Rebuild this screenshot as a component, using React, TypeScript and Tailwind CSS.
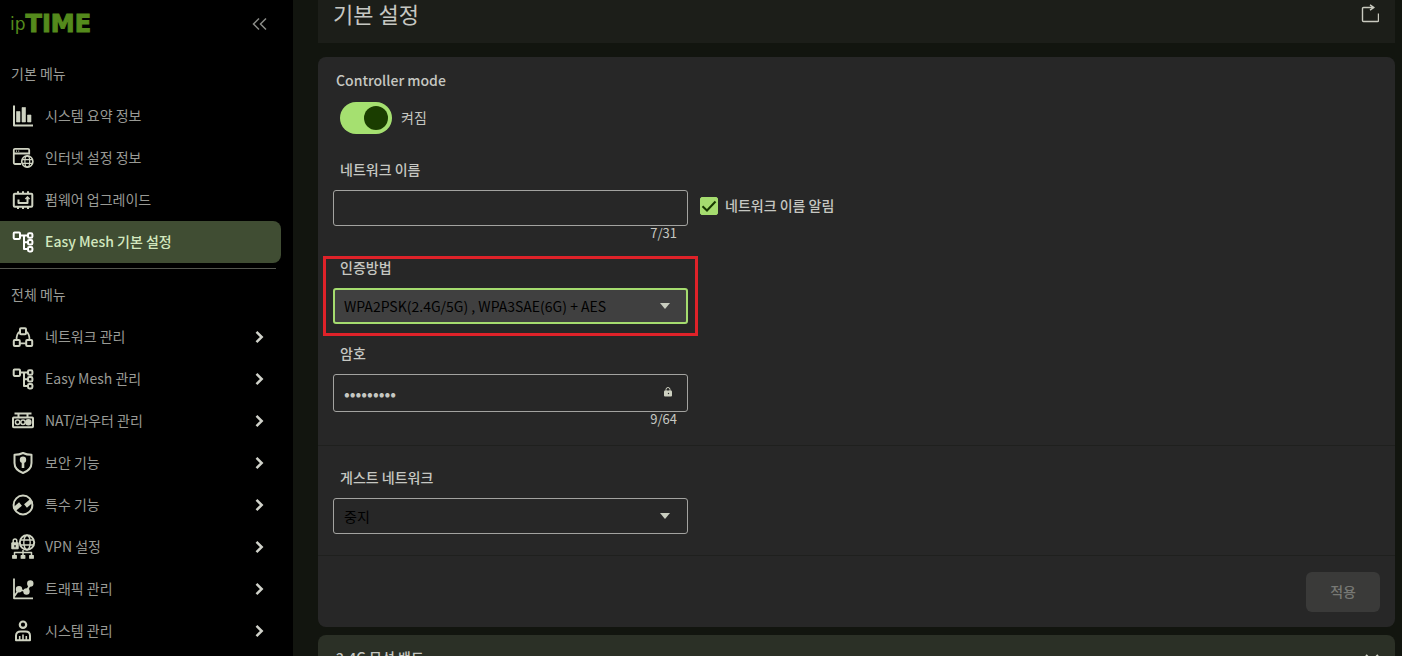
import { useState } from "react";
import type { ReactNode } from "react";

type MenuItem = { label: string; icon: ReactNode };

function Icon({ children }: { children: ReactNode }) {
  return (
    <svg
      viewBox="0 0 24 24"
      className="size-6 shrink-0 overflow-visible"
      fill="none"
      stroke="currentColor"
      strokeWidth="2"
      strokeLinejoin="round"
      aria-hidden="true"
    >
      {children}
    </svg>
  );
}

const meshIcon = (
  <Icon>
    <rect x="2.7" y="2.6" width="6.3" height="6.3" rx="0.8" />
    <path d="M9 5.500h8M13 5.500v13.500h4M13 12.300h4" />
    <rect x="17" y="3.300" width="4.400" height="4.400" rx="1.300" />
    <rect x="17" y="10.100" width="4.400" height="4.400" rx="1.300" />
    <rect x="17" y="17" width="4.400" height="4.400" rx="1.300" />
  </Icon>
);

const basicMenu: MenuItem[] = [
  {
    label: "시스템 요약 정보",
    icon: (
      <Icon>
        <path d="M3 1.500v20h19" />
        <path d="M5.500 7.500H9V18H5.500zM11 3.500h3.500V18H11zM16.500 11H20v7h-3.500z" fill="currentColor" strokeWidth="0.600" />
      </Icon>
    ),
  },
  {
    label: "인터넷 설정 정보",
    icon: (
      <Icon>
        <path d="M10 18H4a1.200 1.200 0 0 1-1.200-1.200V4A1.200 1.200 0 0 1 4 2.800h13A1.200 1.200 0 0 1 18.200 4v4.500M3 7.500h15" strokeWidth="1.800" />
        <path d="M5 5.200h1M7.200 5.200h1" strokeWidth="1.200" />
        <circle cx="16.300" cy="15.500" r="5.600" strokeWidth="1.600" />
        <ellipse cx="16.300" cy="15.500" rx="2.400" ry="5.600" strokeWidth="1.200" />
        <path d="M11 13.700h11M11 17.300h11" strokeWidth="1.200" />
      </Icon>
    ),
  },
  {
    label: "펌웨어 업그레이드",
    icon: (
      <Icon>
        <rect x="2.800" y="5.700" width="18.500" height="13" rx="1" />
        <path d="M7 5.500V3.200M12 5.500V3.200M17 5.500V3.200M7 18.500v2.500M12 18.500v2.500M17 18.500v2.500" />
        <path d="M7.500 11.500V15h9V9.500" />
        <path d="M14.200 10.800L16.500 8.200l2.300 2.600z" fill="currentColor" strokeWidth="0.800" />
      </Icon>
    ),
  },
  { label: "Easy Mesh 기본 설정", icon: meshIcon },
];

const fullMenu: MenuItem[] = [
  {
    label: "네트워크 관리",
    icon: (
      <Icon>
        <rect x="9" y="3.200" width="6" height="6" rx="1" />
        <rect x="2.800" y="15" width="6" height="6" rx="1" />
        <rect x="15.200" y="15" width="6" height="6" rx="1" />
        <path d="M8.800 6.500C6.500 8 5.500 11 5.500 14.800M15.200 6.500c2.300 1.500 3.300 4.500 3.300 8.300M9.100 18.300h5.800" strokeWidth="1.700" />
      </Icon>
    ),
  },
  { label: "Easy Mesh 관리", icon: meshIcon },
  {
    label: "NAT/라우터 관리",
    icon: (
      <Icon>
        <rect x="2" y="8.500" width="20" height="9.700" rx="0.800" />
        <path d="M3.500 4.500h17M7.500 4.500v4M16.500 4.500v4" />
        <circle cx="6.600" cy="13.300" r="2.200" strokeWidth="1.500" />
        <circle cx="12" cy="13.300" r="2.200" strokeWidth="1.500" />
        <circle cx="17.400" cy="13.300" r="2.200" fill="currentColor" />
      </Icon>
    ),
  },
  {
    label: "보안 기능",
    icon: (
      <Icon>
        <path d="M12 2c2.600 1.300 5.500 1.800 8.500 1.800V12c0 5-3.900 8.300-8.500 10C7.400 20.300 3.500 17 3.500 12V3.800C6.500 3.800 9.400 3.300 12 2z" />
        <circle cx="12" cy="8.700" r="2.200" fill="currentColor" />
        <path d="M12 9v8" strokeWidth="2.600" />
      </Icon>
    ),
  },
  {
    label: "특수 기능",
    icon: (
      <Icon>
        <circle cx="12" cy="12" r="9.400" />
        <path d="M3.300 16.300l6.200-5.300M20.700 7.700L14.500 13" strokeWidth="4.400" />
      </Icon>
    ),
  },
  {
    label: "VPN 설정",
    icon: (
      <Icon>
        <circle cx="16" cy="7.500" r="7.200" />
        <ellipse cx="16" cy="7.500" rx="3.200" ry="7.200" strokeWidth="1.400" />
        <path d="M9 5h14M9 10h14" strokeWidth="1.400" />
        <path d="M.8 7.800h6.400v6H.8z" fill="currentColor" strokeWidth="1" />
        <path d="M2.200 8V5.800a1.800 1.800 0 0 1 3.600 0V8" strokeWidth="1.500" />
        <path d="M4 10v2.200" stroke="#000" strokeWidth="1.200" />
        <path d="M3.500 20v-2.500h17V20M12 15v5" strokeWidth="1.500" />
        <path d="M1.700 20.500h3.600v2.700H1.700zM10.200 20.500h3.600v2.700h-3.600zM18.700 20.500h3.600v2.700h-3.600z" fill="currentColor" strokeWidth="1.200" />
      </Icon>
    ),
  },
  {
    label: "트래픽 관리",
    icon: (
      <Icon>
        <path d="M3 1.500v19.800h19M3.500 19L8 12.500l7.500 2 4-8" strokeWidth="1.800" />
        <circle cx="8" cy="12.300" r="2.200" fill="currentColor" />
        <circle cx="15.500" cy="14.500" r="2.200" fill="currentColor" />
        <circle cx="19.300" cy="6.500" r="2.200" fill="currentColor" />
      </Icon>
    ),
  },
  {
    label: "시스템 관리",
    icon: (
      <Icon>
        <circle cx="12" cy="5.700" r="3.200" strokeWidth="2.200" />
        <path d="M5 21.300v-4.500c0-2.800 2-4.300 4.500-4.300h5c2.500 0 4.500 1.500 4.500 4.300v4.500z" />
        <path d="M8.700 17v4M12 15.500V21M15.300 17v4" strokeWidth="1.600" />
      </Icon>
    ),
  },
];

function MenuButton({ item, active, arrow }: { item: MenuItem; active?: boolean; arrow?: boolean }) {
  return (
    <li>
      <button
        type="button"
        className={
          active
            ? "flex h-[42px] w-full items-center gap-[10px] rounded-r-lg bg-[#404d33] pl-[11px] text-left font-medium text-[#d3e8bf]"
            : "flex h-[42px] w-full items-center gap-[10px] pl-[11px] text-left text-[#999a95]"
        }
      >
        <span className={active ? "text-white" : "text-[#cfd3c2]"}>{item.icon}</span>
        <span className="flex-1 pb-[2px]">{item.label}</span>
        {arrow && (
          <svg viewBox="0 0 12 16" className="mr-4 h-4 w-3 text-[#d0d2ca]" fill="none" stroke="currentColor" strokeWidth="2.500" aria-hidden="true">
            <path d="M3.500 2.800L8.700 8l-5.200 5.200" />
          </svg>
        )}
      </button>
    </li>
  );
}

function Sidebar() {
  return (
    <aside className="w-[293px] shrink-0 overflow-hidden bg-black pr-3 text-sm">
      <header className="flex h-[53px] items-start justify-between pt-2 pr-3 pl-[10px]">
        <a href="#" className="flex h-8 items-center text-[#548a1c]">
          <span className="font-['DejaVu_Sans'] text-[17px] leading-8">ip</span>
          <span className="font-['DejaVu_Sans'] text-[24px] leading-[30px] font-bold [-webkit-text-stroke:1px_#548a1c]">
            TIME
          </span>
        </a>
        <button type="button" aria-label="메뉴 접기" className="flex h-8 items-center text-[#8a8b87]">
          <svg viewBox="0 0 18 16" className="h-4 w-[18px]" fill="none" stroke="currentColor" strokeWidth="1.500">
            <path d="M8 2.500L2.500 8 8 13.500M15 2.500L9.500 8l5.500 5.500" />
          </svg>
        </button>
      </header>
      <nav>
        <h2 className="h-[42px] pl-[11px] leading-10 text-[#9b9c97]">기본 메뉴</h2>
        <ul>
          {basicMenu.map((item, i) => (
            <MenuButton key={item.label} item={item} active={i === 3} />
          ))}
        </ul>
        <hr className="my-[5px] mr-[5px] border-[#54564f]" />
        <h2 className="h-[42px] pl-[11px] leading-10 text-[#9b9c97]">전체 메뉴</h2>
        <ul>
          {fullMenu.map((item) => (
            <MenuButton key={item.label} item={item} arrow />
          ))}
        </ul>
      </nav>
    </aside>
  );
}

function SelectField({ id, label, value, focused }: { id: string; label: string; value: string; focused?: boolean }) {
  return (
    <div className="relative w-[355px] max-w-full">
      <label htmlFor={id} className="mb-3 block pl-[7px] leading-[18px] font-medium">
        {label}
      </label>
      <div className="relative">
        <select
          id={id}
          className={
            focused
              ? "block h-9 w-full appearance-none rounded-[3px] border-2 border-[#a5dc6f] bg-[#404040] px-[9px] text-black outline-none"
              : "block h-9 w-full appearance-none rounded-[3px] border border-[#a3a3a0] bg-transparent px-[10px] text-black outline-none"
          }
        >
          <option>{value}</option>
        </select>
        <svg viewBox="0 0 10 6" className="pointer-events-none absolute top-[15px] right-[18px] h-[6px] w-[10px]" fill="#c9cdbf" aria-hidden="true">
          <path d="M0 0h10L5 6z" />
        </svg>
      </div>
      {focused && (
        <div className="pointer-events-none absolute -top-[2px] -right-[10px] -bottom-3 -left-[10px] border-3 border-[#df2229]" />
      )}
    </div>
  );
}

export default function App() {
  const [controller, setController] = useState(true);
  const [broadcast, setBroadcast] = useState(true);
  const [name, setName] = useState("");
  const [password, setPassword] = useState("•••••••••");

  return (
    <div className="flex h-screen overflow-hidden bg-[#12150f] font-['Noto_Sans_CJK_KR','Noto_Sans',sans-serif] text-sm text-[#c6c7c2]">
      <Sidebar />
      <main className="min-w-0 flex-1 overflow-hidden pr-[7px] pl-[25px]">
        <header className="mb-[14px] flex items-start justify-between bg-[#1c1e19] pr-4 pb-[17px] pl-[15px]">
          <h1 className="text-[22px] leading-[26px]">기본 설정</h1>
          <button type="button" aria-label="내보내기" className="mt-1 -mb-1 text-[#c9cabf]">
            <svg viewBox="0 0 18 20" className="h-5 w-[18px]" fill="none" stroke="currentColor" strokeWidth="1.400" strokeLinejoin="round">
              <path d="M12 3.500H2.500a1 1 0 0 0-1 1v12a1 1 0 0 0 1 1h14a1 1 0 0 0 1-1V9.500M9 .8l4 2.700L9 6.200" />
            </svg>
          </button>
        </header>

        <form className="rounded-lg bg-[#272727]" onSubmit={(e) => e.preventDefault()}>
          <section className="border-b border-[#1f201e] px-[15px] pt-[14px] pb-[19px]">
            <p className="mb-[13px] pl-[3px] leading-[18px] font-medium">Controller mode</p>
            <label className="mb-[26px] flex h-8 w-fit items-center gap-[9px] pl-[7px]">
              <span className="relative h-8 w-[52px]">
                <input
                  type="checkbox"
                  role="switch"
                  checked={controller}
                  onChange={(e) => setController(e.target.checked)}
                  className="peer block h-8 w-[52px] appearance-none rounded-full bg-[#555] checked:bg-[#a5e070]"
                />
                <span className="pointer-events-none absolute top-1 left-1 size-6 rounded-full bg-[#1a3d00] peer-checked:left-6" />
              </span>
              <span className="pb-[2px]">{controller ? "켜짐" : "꺼짐"}</span>
            </label>

            <label htmlFor="ssid" className="mb-3 block w-fit pl-[7px] leading-[18px] font-medium">
              네트워크 이름
            </label>
            <div className="flex flex-wrap items-start gap-3">
              <div className="w-[355px] max-w-full">
                <input
                  id="ssid"
                  value={name}
                  onChange={(e) => setName(e.target.value)}
                  className="block h-9 w-full rounded-[3px] border border-[#a3a3a0] bg-transparent px-[10px] outline-none"
                />
                <p className="mb-[18px] pr-[11px] text-right text-[13px] leading-[14px]">7/31</p>
              </div>
              <label className="flex h-8 items-center gap-[7px] font-medium">
                <span className="relative size-[18px]">
                  <input
                    type="checkbox"
                    checked={broadcast}
                    onChange={(e) => setBroadcast(e.target.checked)}
                    className="peer block size-[18px] appearance-none rounded-xs border border-[#a5dc6f] checked:bg-[#a5dc6f]"
                  />
                  <svg viewBox="0 0 18 18" className="pointer-events-none absolute inset-0 hidden size-[18px] peer-checked:block" fill="none" stroke="#173800" strokeWidth="2">
                    <path d="M2.500 9.200l4.500 4.300 8.500-9" />
                  </svg>
                </span>
                <span className="pb-[2px]">네트워크 이름 알림</span>
              </label>
            </div>

            <SelectField id="auth" label="인증방법" value="WPA2PSK(2.4G/5G) , WPA3SAE(6G) + AES" focused />

            <label htmlFor="password" className="mt-5 mb-3 block w-fit pl-[7px] leading-[18px] font-medium">
              암호
            </label>
            <div className="w-[355px] max-w-full">
              <div className="relative">
                <input
                  id="password"
                  type="password"
                  value={password}
                  onChange={(e) => setPassword(e.target.value)}
                  className="block h-[38px] w-full rounded-[3px] border border-[#a3a3a0] bg-transparent pr-9 pb-[2px] pl-[10px] text-[17px] outline-none"
                />
                <svg viewBox="0 0 8 10" className="pointer-events-none absolute top-[13px] right-4 h-[10px] w-2" fill="#cdd0c0" aria-hidden="true">
                  <path d="M2 4V2.500a2 2 0 0 1 4 0V4" fill="none" stroke="#cdd0c0" />
                  <rect y="3.500" width="8" height="6" rx="1" />
                  <circle cx="4.500" cy="6.500" r="0.700" fill="#272727" />
                </svg>
              </div>
              <p className="pr-[11px] text-right text-[13px] leading-[14px]">{password.length}/64</p>
            </div>
          </section>

          <section className="border-b border-[#1f201e] px-[15px] pt-[22px] pb-[21px]">
            <SelectField id="guest" label="게스트 네트워크" value="중지" />
          </section>

          <div className="flex justify-end px-[15px] pt-4 pb-[15px]">
            <button type="submit" disabled className="h-10 rounded-md bg-[#3a3a39] px-6 pb-[2px] font-medium text-[#777874]">
              적용
            </button>
          </div>
        </form>

        <button type="button" className="mt-2 flex w-full items-start justify-between rounded-t-lg bg-[#2b3026] px-[15px] py-3 text-left">
          <span className="pl-[3px] leading-5 font-medium">2.4G 무선 밴드</span>
          <svg viewBox="0 0 16 12" className="mt-[6px] h-3 w-4" fill="none" stroke="#d5d8cb" strokeWidth="2" aria-hidden="true">
            <path d="M2 2l6 6 6-6" />
          </svg>
        </button>
      </main>
    </div>
  );
}
